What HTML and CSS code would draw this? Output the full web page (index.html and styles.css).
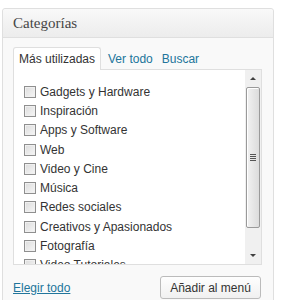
FILE: index.html
```html
<!DOCTYPE html>
<html lang="es">
<head>
    <meta charset="UTF-8">
    <title>Categorías</title>
    <link rel="stylesheet" href="styles.css">
</head>
<body>
    <div class="postbox">
        <h3 class="postbox-title">Categorías</h3>
        <div class="inside">
            <ul class="tabs">
                <li class="tab active">Más utilizadas</li>
                <li class="tab"><a href="#">Ver todo</a></li>
                <li class="tab"><a href="#">Buscar</a></li>
            </ul>
            <div class="panel">
                <ul class="checklist">
                    <li><span class="check"></span>Gadgets y Hardware</li>
                    <li><span class="check"></span>Inspiración</li>
                    <li><span class="check"></span>Apps y Software</li>
                    <li><span class="check"></span>Web</li>
                    <li><span class="check"></span>Video y Cine</li>
                    <li><span class="check"></span>Música</li>
                    <li><span class="check"></span>Redes sociales</li>
                    <li><span class="check"></span>Creativos y Apasionados</li>
                    <li><span class="check"></span>Fotografía</li>
                    <li><span class="check"></span>Video Tutoriales</li>
                </ul>
                <div class="scrollbar">
                    <div class="arrow up"></div>
                    <div class="track">
                        <div class="thumb"><span class="grip"></span></div>
                    </div>
                    <div class="arrow down"></div>
                </div>
            </div>
            <div class="actions">
                <a href="#" class="select-all">Elegir todo</a>
                <button class="button">Añadir al menú</button>
            </div>
        </div>
    </div>
</body>
</html>
```

FILE: styles.css
```css
body {
    margin: 0;
    background: #fff;
    font-family: 'Liberation Sans', Arial, sans-serif;
    font-size: 12px;
    color: #333;
}
.postbox {
    margin: 8px 0 0 2px;
    width: 270px;
    height: 300px;
    border: 1px solid #dfdfdf;
    border-radius: 3px;
    background: #f9f9f9;
}
.postbox-title {
    margin: 0;
    height: 28px;
    padding: 0 10px;
    font-family: 'Liberation Serif', Georgia, serif;
    font-size: 15px;
    font-weight: normal;
    line-height: 28px;
    color: #464646;
    background: linear-gradient(#f9f9f9, #ececec);
    border-bottom: 1px solid #dfdfdf;
    border-radius: 3px 3px 0 0;
}
.inside {
    padding: 9px 11px 0 10px;
}
.tabs {
    display: flex;
    margin: 0;
    padding: 0;
    list-style: none;
}
.tab {
    padding: 0 5px 0 5px;
    height: 21px;
    line-height: 22px;
    border: 1px solid transparent;
    border-bottom: none;
}
.tab.active {
    background: #fff;
    border-color: #dfdfdf;
    border-radius: 3px 3px 0 0;
    margin-bottom: -1px;
    height: 22px;
    position: relative;
    color: #333;
}
.tab a {
    color: #21759b;
    text-decoration: none;
}
.tab + .tab {
    padding-left: 6px;
    padding-right: 1px;
}
.panel {
    display: flex;
    height: 194px;
    border: 1px solid #dfdfdf;
    background: #fff;
    overflow: hidden;
}
.checklist {
    flex: 1;
    margin: 0;
    padding: 12px 0 0 10px;
    list-style: none;
}
.checklist li {
    display: flex;
    align-items: center;
    height: 19.3px;
    white-space: nowrap;
}
.check {
    width: 10px;
    height: 10px;
    margin-right: 4px;
    border: 1px solid #8f8f8f;
    background: linear-gradient(135deg, #dcdcdc, #f6f6f6);
    box-shadow: inset 0 0 0 1px #f0f0f0;
}
.scrollbar {
    width: 16px;
    display: flex;
    flex-direction: column;
    background: #f0f0f0;
}
.arrow {
    height: 17px;
    position: relative;
}
.arrow::after {
    content: '';
    position: absolute;
    left: 5px;
    width: 0;
    height: 0;
    border-left: 3px solid transparent;
    border-right: 3px solid transparent;
}
.arrow.up::after {
    top: 7px;
    border-bottom: 3px solid #404040;
}
.arrow.down::after {
    top: 7px;
    border-top: 3px solid #404040;
}
.track {
    flex: 1;
    padding: 0 1px;
}
.thumb {
    height: 139px;
    border: 1px solid #9a9a9a;
    border-radius: 2px;
    background: linear-gradient(to right, #f2f2f2, #dcdcdc);
    box-shadow: inset 1px 1px 0 #fff;
    display: flex;
    align-items: center;
    justify-content: center;
}
.grip {
    width: 6px;
    height: 7px;
    background: repeating-linear-gradient(#555 0 1px, transparent 1px 2px);
}
.actions {
    display: flex;
    justify-content: space-between;
    align-items: center;
    padding-top: 11px;
}
.select-all {
    color: #21759b;
    text-decoration: underline;
}
.button {
    width: 101px;
    height: 23px;
    margin-right: 1px;
    padding: 0;
    font-family: 'Liberation Sans', Arial, sans-serif;
    font-size: 12px;
    color: #333;
    border: 1px solid #bbb;
    border-radius: 3px;
    background: linear-gradient(#fefefe, #f0f0f0);
}
```
